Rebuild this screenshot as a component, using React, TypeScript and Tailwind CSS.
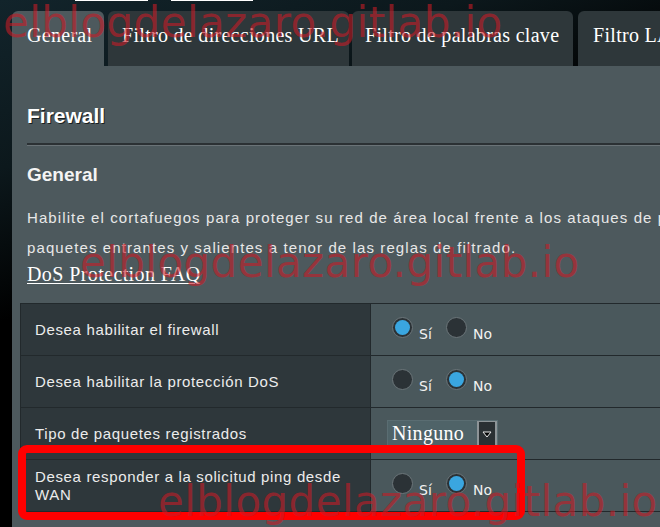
import React from "react";

function Radio({ checked }: { checked: boolean }) {
  return (
    <span className="mb-[5px] flex h-[21px] w-[21px] shrink-0 items-center justify-center rounded-full border border-[#6b7579] bg-[#2b3236]">
      {checked && <span className="h-[15px] w-[15px] rounded-full bg-[#3aa6e0]" />}
    </span>
  );
}

function RadioPair({ yes }: { yes: boolean }) {
  return (
    <div className="flex h-full items-center pl-[21px] font-['DejaVu_Sans',sans-serif] text-[14px] leading-[16px] text-[#f2f2f2]">
      <Radio checked={yes} />
      <span className="ml-[6px] mt-[8px] w-[27px]">Sí</span>
      <Radio checked={!yes} />
      <span className="ml-[6px] mt-[8px]">No</span>
    </div>
  );
}

function Row({ label, children }: { label: React.ReactNode; children: React.ReactNode }) {
  return (
    <div className="flex h-[52px] border-b border-[#22292c]">
      <div className="flex w-[350px] shrink-0 items-center border-r border-[#22292c] bg-[#2e373b] pl-[14px] pr-[8px] text-[15px] leading-[18px] tracking-[0.65px] text-[#ececec]">
        <span>{label}</span>
      </div>
      <div className="w-[400px] shrink-0 bg-[#4a585c]">{children}</div>
    </div>
  );
}

const wm = "pointer-events-none absolute whitespace-nowrap font-['DejaVu_Sans',sans-serif] text-[42px] leading-[42px] tracking-[0.4px] text-[rgba(200,28,38,0.6)]";

export default function App() {
  return (
    <div className="relative h-[527px] w-[660px] overflow-hidden bg-[linear-gradient(160deg,#12242b_0%,#0c181c_22%,#000_42%)] font-['Liberation_Sans',Arial,sans-serif]">
      <div className="absolute left-[75px] top-0 h-px w-[73px] bg-white" />
      <div className="absolute left-[171px] top-0 h-px w-[82px] bg-white" />

      <div className="pl-[12px] pt-[11px]">
        <div className="flex h-[55px] whitespace-nowrap font-['Liberation_Serif',serif] text-[20px] leading-[22px] tracking-[0.3px] text-white">
          <div className="w-[92px] shrink-0 rounded-t-[6px] bg-[#4d595d] pl-[15px] pt-[13px]">General</div>
          <div className="ml-[4px] w-[241px] shrink-0 rounded-t-[6px] bg-[#2e373a] pl-[14px] pt-[13px]">Filtro de direcciones URL</div>
          <div className="ml-[3px] w-[221px] shrink-0 rounded-t-[6px] bg-[#2e373a] pl-[13px] pt-[13px]">Filtro de palabras clave</div>
          <div className="ml-[5px] w-[140px] shrink-0 rounded-t-[6px] bg-[#2e373a] pl-[15px] pt-[13px]">Filtro LAN</div>
        </div>

        <div className="h-[461px] w-[760px] bg-[#4d595d] pl-[8px] pt-[38px]">
          <div className="pl-[7px] text-[21px] font-bold leading-[24px] text-white [text-shadow:1px_1px_0_#1a1f21]">Firewall</div>
          <div className="ml-[7px] mt-[15px] h-[2px] bg-[#2b3134]" />
          <div className="ml-[7px] h-px bg-[#6a7377]" />
          <div className="mt-[18px] pl-[7px] text-[19px] font-bold leading-[22px] text-[#f4f4f4]">General</div>
          <div className="mt-[17px] whitespace-nowrap pl-[7px] text-[15px] leading-[30px] tracking-[1.1px] text-[#e8e8e8]">
            Habilite el cortafuegos para proteger su red de área local frente a los ataques de piratas informáticos y filtrar los
            <br />
            paquetes entrantes y salientes a tenor de las reglas de filtrado.
          </div>
          <div className="pl-[7px] font-['Liberation_Serif',serif] text-[20px] leading-[22px] tracking-[0.4px] text-white">
            <span className="underline decoration-1 underline-offset-[2px]">DoS Protection FAQ</span>
          </div>

          <div className="mt-[18px] w-[750px] border-l border-t border-[#22292c]">
            <Row label="Desea habilitar el firewall">
              <RadioPair yes={true} />
            </Row>
            <Row label="Desea habilitar la protección DoS">
              <RadioPair yes={false} />
            </Row>
            <Row label="Tipo de paquetes registrados">
              <div className="flex h-full items-center pl-[16px]">
                <div className="flex h-[28px] w-[111px] border border-[#5a6d72] bg-[#4f6368]">
                  <span className="flex-1 pl-[4px] font-['Liberation_Serif',serif] text-[20px] leading-[24px] tracking-[0.3px] text-white">Ninguno</span>
                  <span className="flex w-[20px] items-center justify-center border-x-2 border-t border-[#8d9497] bg-[#2a3033]">
                    <svg width="10" height="7" viewBox="0 0 10 7">
                      <path d="M1 1 L9 1 L5 6 Z" fill="#000" stroke="#e8e8e8" strokeWidth="1" />
                    </svg>
                  </span>
                </div>
              </div>
            </Row>
            <Row label="Desea responder a la solicitud ping desde WAN">
              <RadioPair yes={false} />
            </Row>
          </div>
        </div>
      </div>

      <div className="pointer-events-none absolute left-[18px] top-[445px] h-[75px] w-[507px] rounded-[9px] border-[8px] border-[#ff0000]" />

      <span className={wm + " left-[3px] top-[2px]"}>elblogdelazaro.gitlab.io</span>
      <span className={wm + " left-[80px] top-[242px]"}>elblogdelazaro.gitlab.io</span>
      <span className={wm + " left-[158px] top-[481px]"}>elblogdelazaro.gitlab.io</span>
    </div>
  );
}
